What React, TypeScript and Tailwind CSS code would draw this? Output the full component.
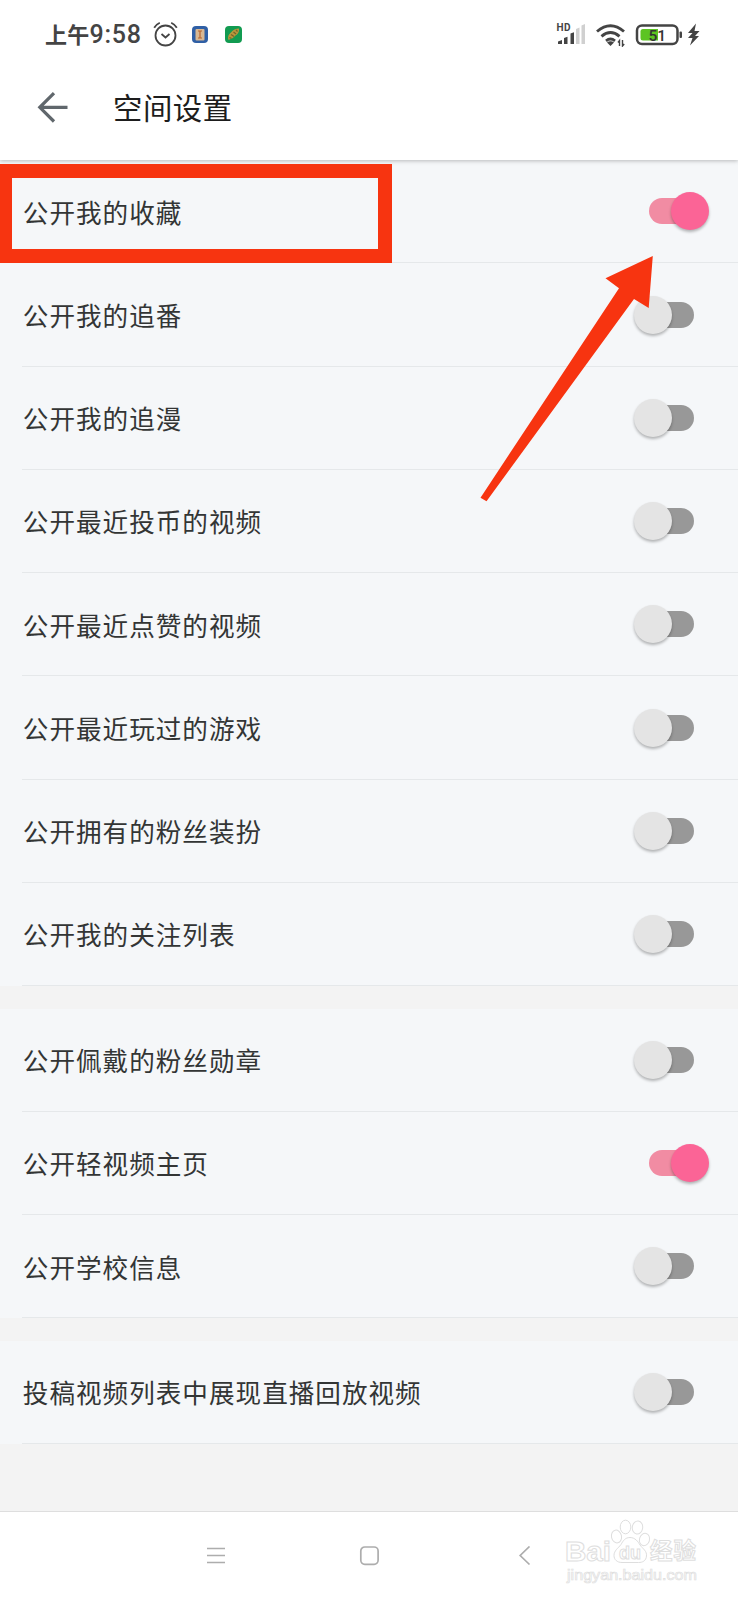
type Setting = { label: string; on?: boolean };

const groups: Setting[][] = [
  [
    { label: '公开我的收藏', on: true },
    { label: '公开我的追番' },
    { label: '公开我的追漫' },
    { label: '公开最近投币的视频' },
    { label: '公开最近点赞的视频' },
    { label: '公开最近玩过的游戏' },
    { label: '公开拥有的粉丝装扮' },
    { label: '公开我的关注列表' },
  ],
  [
    { label: '公开佩戴的粉丝勋章' },
    { label: '公开轻视频主页', on: true },
    { label: '公开学校信息' },
  ],
  [{ label: '投稿视频列表中展现直播回放视频' }],
];

function Toggle({ on }: { on?: boolean }) {
  return (
    <button
      role="switch"
      aria-checked={!!on}
      className={`flex h-[26px] w-[45px] items-center rounded-full ${on ? 'bg-[#f18ca3]' : 'bg-[#989898]'}`}
    >
      <span
        className={`size-[38px] shrink-0 rounded-full shadow-[0_2px_3px_rgba(0,0,0,0.28)] ${
          on ? 'ml-[22px] bg-[#fb6496]' : '-ml-[15px] bg-[#e4e4e4]'
        }`}
      />
    </button>
  );
}

function Row({ label, on }: Setting) {
  return (
    <div className="h-[103.25px] pl-[22px]">
      <div className="flex h-full items-center justify-between border-b border-[#e5e8ea] pl-[0.8px] pr-[43.8px] pt-[0.6px]">
        <span className="text-[25.6px] leading-none tracking-[1px] text-[#333535]">{label}</span>
        <Toggle on={on} />
      </div>
    </div>
  );
}

function StatusBar() {
  return (
    <div className="flex h-[68px] items-center pl-[45px] pr-[38px] text-[#444]">
      <span className="w-[108px] whitespace-nowrap text-[22px] font-bold leading-none tracking-[0.2px]">
        上午<span className="font-['Roboto'] text-[25px] font-medium tracking-[0.8px]">9:58</span>
      </span>
      <svg className="h-[26px] w-[26px]" viewBox="0 0 26 26" fill="none" stroke="#444" strokeWidth="1.8">
        <circle cx="12.5" cy="14.5" r="10" />
        <path d="M8.5 13l4 3.5 4-3.5M1.2 6.8Q3 3.5 6.8 1.8M18.2 1.8q3.8 1.7 5.6 5" />
      </svg>
      <svg className="ml-[13px] h-[17px] w-[16px]" viewBox="0 0 16 17">
        <rect width="16" height="17" rx="4" fill="#2f5fa5" />
        <rect x="3.5" y="3" width="9" height="11.5" rx="1" fill="#d8b893" />
        <path d="M6 5h4M8 5v7M6 12h4" stroke="#b8642d" strokeWidth="1.2" />
      </svg>
      <svg className="ml-[17px] h-[17px] w-[17px]" viewBox="0 0 17 17">
        <rect width="17" height="17" rx="4" fill="#129b51" />
        <path d="M3.5 14Q2 9 6 6.5 9 2.5 14 2.5 14.5 7 10.5 9.5 8 13 3.5 14z" fill="#b8973a" />
        <path d="M4.5 11.5l2 1M6 8.5l3 2M8.5 6l2.5 2M11 4l1.5 1.5" stroke="#76622b" strokeWidth="1.3" fill="none" />
      </svg>
      <svg className="ml-auto h-[26px] w-[144px]" viewBox="556 20 144 26">
        <text x="556.5" y="30" fontFamily="Roboto" fontSize="10" fontWeight="700" fill="#444" letterSpacing="0.5">HD</text>
        <g fill="#444">
          <path d="M558 43v-2.5l4-1.5v4zM564 43v-6l3.5-1.3V43zM570.5 43v-10.5l3.5-1.3V43z" />
          <path d="M576 43V28l3.5-1.5V43zM581.5 43V24.5l3.5-1.5v20z" fill="#d0d0d0" />
        </g>
        <g fill="none" stroke="#444" strokeWidth="2.9">
          <path d="M597 30.5q13.5-11.5 27 0M601.5 35.3q9-7.4 18 0M606 39.8q4.5-3.4 9 0" />
        </g>
        <path d="M607 41.5q3.5-2.5 7 0L610.5 45z" fill="#444" />
        <path d="M619.5 45v-5.5l-1.5 2M622.5 39v6l1.7-2" fill="none" stroke="#444" strokeWidth="1.4" />
        <rect x="637" y="24.5" width="40.5" height="18.5" rx="5" fill="#fff" stroke="#444" strokeWidth="2.5" />
        <path d="M643 28h15v11.500h-15q-2.500 0-2.500-2.500v-6.500q0-2.500 2.500-2.500z" fill="#5cc422" />
        <text x="648.5" y="39.5" fontFamily="Roboto" fontSize="15.5" fontWeight="500" fill="#333">51</text>
        <rect x="679.5" y="30.5" width="2.5" height="6.5" rx="1" fill="#444" />
        <path d="M696 22.5L688 32h4.500l-4.500 5h4.500l-2.500 7.500 9-9.500h-4l4.500-5h-5z" fill="#444" />
      </svg>
    </div>
  );
}

function Watermark() {
  return (
    <svg
      className="absolute left-[560px] top-[1516px] h-[72px] w-[150px]"
      viewBox="560 1516 150 72"
      fill="#fff"
      stroke="#dedede"
      strokeWidth="1"
    >
      <text x="565" y="1560.5" fontFamily="Liberation Sans" fontSize="28" fontWeight="700" textLength="46" lengthAdjust="spacingAndGlyphs">Bai</text>
      <ellipse cx="616.5" cy="1536.5" rx="5" ry="6.5" transform="rotate(-12 616.5 1536.5)" />
      <ellipse cx="625.5" cy="1527" rx="5.3" ry="6.8" />
      <ellipse cx="637.5" cy="1527.5" rx="5.2" ry="6.5" transform="rotate(8 637.5 1527.5)" />
      <ellipse cx="644.5" cy="1539.5" rx="5" ry="6.3" transform="rotate(15 644.5 1539.5)" />
      <path d="M630 1537.5c5 0 8 4 10 7.5 3 4 7 6 6.5 11-.5 5-4 6.5-8 6.5H622c-5 0-8-3-8-7 0-5 4-7 7-11 2-3.5 4-7 9-7z" />
      <text x="619" y="1558.5" fontFamily="Liberation Sans" fontSize="19" fontWeight="700" textLength="22" lengthAdjust="spacingAndGlyphs">du</text>
      <text x="650" y="1559" fontFamily="Noto Sans CJK SC" fontSize="22.5" fontWeight="700" textLength="46">经验</text>
      <text x="567" y="1579.5" fontFamily="Liberation Sans" fontSize="15" strokeWidth="0.7" textLength="130" lengthAdjust="spacingAndGlyphs">jingyan.baidu.com</text>
    </svg>
  );
}

export default function App() {
  return (
    <div className="relative flex h-[1600px] w-[738px] flex-col overflow-hidden bg-[#f3f3f3] font-['Noto_Sans_CJK_SC',sans-serif]">
      <header className="z-10 h-[160px] shrink-0 bg-white shadow-[0_1px_4px_rgba(0,0,0,0.25)]">
        <StatusBar />
        <div className="flex h-[80px] items-center pl-[37px]">
          <svg className="h-[32px] w-[32px]" viewBox="0 0 32 32" fill="none" stroke="#60676c" strokeWidth="3.2">
            <path d="M30.5 15.3H3M17 1.2L2.8 15.3 17 29.5" />
          </svg>
          <h1 className="ml-[44px] pb-[2px] text-[29.4px] leading-none tracking-[0.5px] text-[#1d1d1d]">空间设置</h1>
        </div>
      </header>
      <main className="flex flex-1 flex-col gap-[22.5px]">
        {groups.map((rows) => (
          <section key={rows[0].label} className="bg-[#f5f7f9]">
            {rows.map((row) => (
              <Row key={row.label} {...row} />
            ))}
          </section>
        ))}
      </main>
      <nav className="flex h-[89px] shrink-0 items-center border-t border-[#dedede] bg-white pl-[206px] text-[#adadad]">
        <svg className="h-[20px] w-[20px]" viewBox="0 0 20 20" stroke="currentColor" strokeWidth="1.6">
          <path d="M1 2.5h18M1 9.5h18M1 16.5h18" />
        </svg>
        <svg className="ml-[133px] h-[20px] w-[20px]" viewBox="0 0 20 20" fill="none" stroke="currentColor" strokeWidth="1.7">
          <rect x="1.8" y="1" width="17.3" height="17.3" rx="4" />
        </svg>
        <svg className="ml-[139px] h-[20px] w-[13px]" viewBox="0 0 13 20" fill="none" stroke="currentColor" strokeWidth="1.7">
          <path d="M11.5 .5L2.2 9.5l9.3 9" />
        </svg>
      </nav>
      <div className="absolute left-0 top-[164px] z-20 h-[99px] w-[392px] border-y-[14px] border-l-[12px] border-r-[14px] border-[#f73410]" />
      <svg className="absolute left-[476px] top-[250px] z-20 h-[260px] w-[184px]" viewBox="476 250 184 260">
        <path d="M652.8 256L605.5 278.3 619 288.3 480.5 497.7 486.5 501.3 634 299 648.7 308z" fill="#f73410" />
      </svg>
      <Watermark />
    </div>
  );
}
